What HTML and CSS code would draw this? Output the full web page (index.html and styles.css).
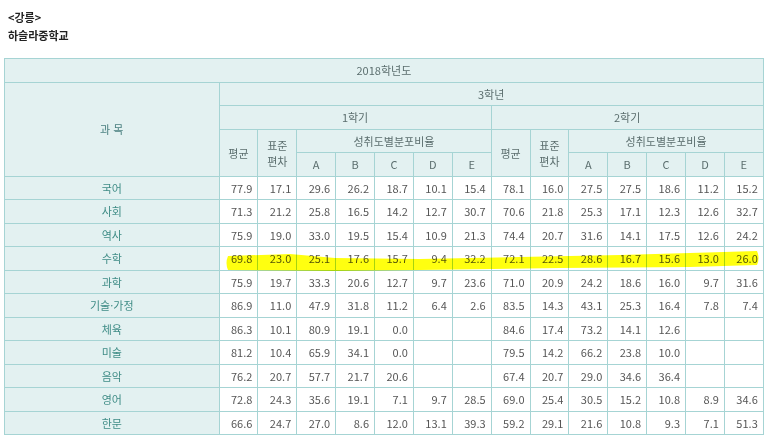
FILE: index.html
```html
<!DOCTYPE html>
<html lang="ko">
<head>
<meta charset="utf-8">
<title>하슬라중학교</title>
<link rel="stylesheet" href="styles.css">
</head>
<body>
<div class="page">
  <div class="heading">
    <p class="line">&lt;강릉&gt;</p>
    <p class="line">하슬라중학교</p>
  </div>
  <div class="table-wrap">
    <table class="scores">
      <colgroup>
        <col class="c-subj">
        <col class="c-num"><col class="c-num"><col class="c-num"><col class="c-num"><col class="c-num"><col class="c-num"><col class="c-num">
        <col class="c-num"><col class="c-num"><col class="c-num"><col class="c-num"><col class="c-num"><col class="c-num"><col class="c-num">
      </colgroup>
      <thead>
        <tr><th colspan="15">2018학년도</th></tr>
        <tr><th rowspan="4" class="subj-head">과 목</th><th colspan="14">3학년</th></tr>
        <tr><th colspan="7">1학기</th><th colspan="7">2학기</th></tr>
        <tr>
          <th rowspan="2">평균</th><th rowspan="2" class="two">표준<br>편차</th><th colspan="5">성취도별분포비율</th>
          <th rowspan="2">평균</th><th rowspan="2" class="two">표준<br>편차</th><th colspan="5">성취도별분포비율</th>
        </tr>
        <tr>
          <th>A</th><th>B</th><th>C</th><th>D</th><th>E</th>
          <th>A</th><th>B</th><th>C</th><th>D</th><th>E</th>
        </tr>
      </thead>
      <tbody>
        <tr><th class="subj">국어</th><td>77.9</td><td>17.1</td><td>29.6</td><td>26.2</td><td>18.7</td><td>10.1</td><td>15.4</td><td>78.1</td><td>16.0</td><td>27.5</td><td>27.5</td><td>18.6</td><td>11.2</td><td>15.2</td></tr>
        <tr><th class="subj">사회</th><td>71.3</td><td>21.2</td><td>25.8</td><td>16.5</td><td>14.2</td><td>12.7</td><td>30.7</td><td>70.6</td><td>21.8</td><td>25.3</td><td>17.1</td><td>12.3</td><td>12.6</td><td>32.7</td></tr>
        <tr><th class="subj">역사</th><td>75.9</td><td>19.0</td><td>33.0</td><td>19.5</td><td>15.4</td><td>10.9</td><td>21.3</td><td>74.4</td><td>20.7</td><td>31.6</td><td>14.1</td><td>17.5</td><td>12.6</td><td>24.2</td></tr>
        <tr><th class="subj">수학</th><td>69.8</td><td>23.0</td><td>25.1</td><td>17.6</td><td>15.7</td><td>9.4</td><td>32.2</td><td>72.1</td><td>22.5</td><td>28.6</td><td>16.7</td><td>15.6</td><td>13.0</td><td>26.0</td></tr>
        <tr><th class="subj">과학</th><td>75.9</td><td>19.7</td><td>33.3</td><td>20.6</td><td>12.7</td><td>9.7</td><td>23.6</td><td>71.0</td><td>20.9</td><td>24.2</td><td>18.6</td><td>16.0</td><td>9.7</td><td>31.6</td></tr>
        <tr><th class="subj">기술·가정</th><td>86.9</td><td>11.0</td><td>47.9</td><td>31.8</td><td>11.2</td><td>6.4</td><td>2.6</td><td>83.5</td><td>14.3</td><td>43.1</td><td>25.3</td><td>16.4</td><td>7.8</td><td>7.4</td></tr>
        <tr><th class="subj">체육</th><td>86.3</td><td>10.1</td><td>80.9</td><td>19.1</td><td>0.0</td><td></td><td></td><td>84.6</td><td>17.4</td><td>73.2</td><td>14.1</td><td>12.6</td><td></td><td></td></tr>
        <tr><th class="subj">미술</th><td>81.2</td><td>10.4</td><td>65.9</td><td>34.1</td><td>0.0</td><td></td><td></td><td>79.5</td><td>14.2</td><td>66.2</td><td>23.8</td><td>10.0</td><td></td><td></td></tr>
        <tr><th class="subj">음악</th><td>76.2</td><td>20.7</td><td>57.7</td><td>21.7</td><td>20.6</td><td></td><td></td><td>67.4</td><td>20.7</td><td>29.0</td><td>34.6</td><td>36.4</td><td></td><td></td></tr>
        <tr><th class="subj">영어</th><td>72.8</td><td>24.3</td><td>35.6</td><td>19.1</td><td>7.1</td><td>9.7</td><td>28.5</td><td>69.0</td><td>25.4</td><td>30.5</td><td>15.2</td><td>10.8</td><td>8.9</td><td>34.6</td></tr>
        <tr><th class="subj">한문</th><td>66.6</td><td>24.7</td><td>27.0</td><td>8.6</td><td>12.0</td><td>13.1</td><td>39.3</td><td>59.2</td><td>29.1</td><td>21.6</td><td>10.8</td><td>9.3</td><td>7.1</td><td>51.3</td></tr>
      </tbody>
    </table>
    <svg class="marker" width="759" height="376" viewBox="0 0 759 376" aria-hidden="true">
      <path d="M224 198 L286 196 L331 200 L416 201 L516 199 L616 197 L686 195 L753 193 Q756 200 753 207 L686 209 L556 210 L416 212 L331 213 L224 212 Q221 205 224 198 Z" fill="#ffff10"/>
    </svg>
  </div>
</div>
</body>
</html>
```

FILE: styles.css
```css
html, body {
  margin: 0;
  padding: 0;
  background: #ffffff;
}

body {
  font-family: "Noto Sans CJK KR", "Noto Sans", sans-serif;
  color: #555555;
}

.page {
  padding: 8px 4px 0 4px;
}

.heading {
  padding-left: 4px;
  margin-bottom: 14px;
}

.line {
  margin: 0;
  font-size: 11px;
  line-height: 18px;
  font-weight: bold;
  color: #222222;
}

.table-wrap {
  position: relative;
  width: 759px;
}

.scores {
  border-collapse: collapse;
  table-layout: fixed;
  width: 759px;
  font-size: 11px;
}

.c-subj { width: 214.5px; }
.c-num { width: 38.89px; }

.scores th,
.scores td {
  border: 1px solid #a6d4d4;
  padding: 0;
  line-height: 16px;
  font-weight: normal;
}

.scores tr {
  height: 23.5px;
}

.scores thead th {
  background: #e3f1f1;
  color: #5b6e6e;
  text-align: center;
}

.scores thead th.subj-head {
  color: #4a8080;
}

.scores th.subj {
  background: #e3f1f1;
  color: #3f8c86;
  text-align: center;
}

.scores td {
  text-align: right;
  padding-right: 5px;
  color: #555555;
  background: #ffffff;
}

.marker {
  position: absolute;
  left: 0;
  top: 0;
  pointer-events: none;
  mix-blend-mode: multiply;
}
```
